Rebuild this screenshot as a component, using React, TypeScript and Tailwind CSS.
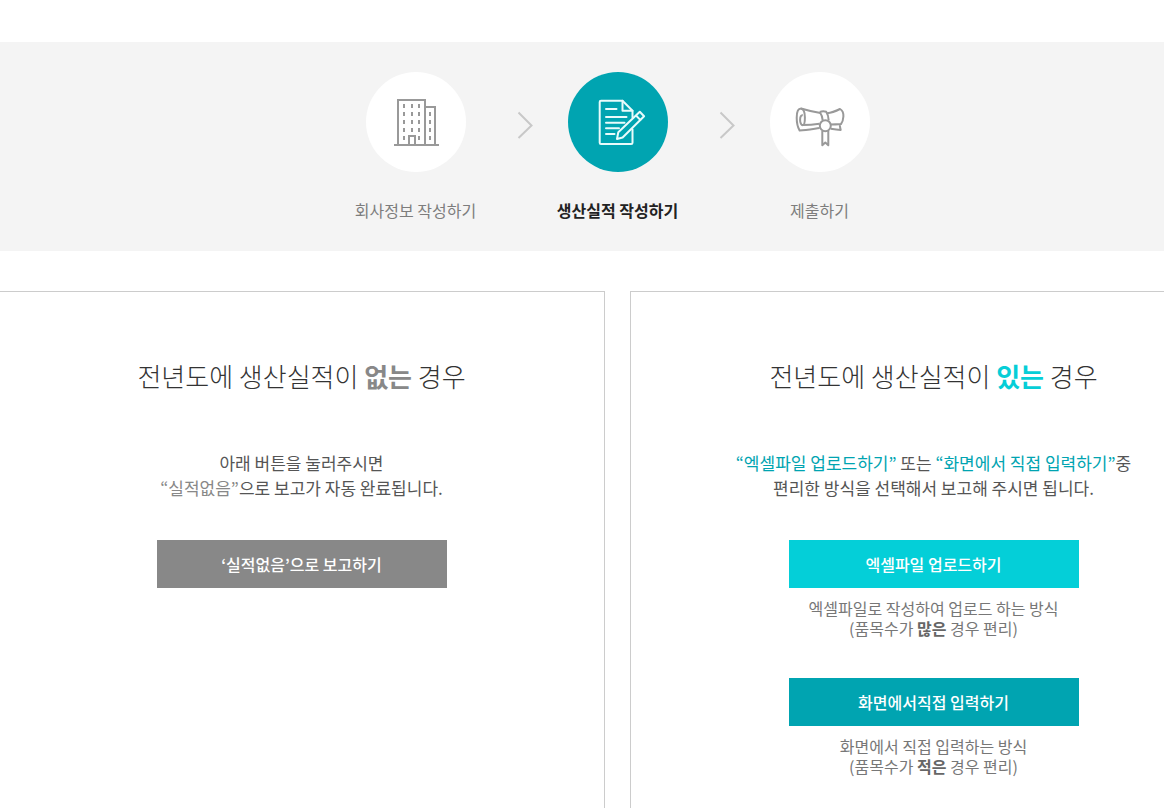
import type { ReactNode } from "react";

function BuildingIcon() {
  return (
    <svg viewBox="0 0 100 100" className="w-full h-full" fill="none" stroke="#999" strokeWidth="2" aria-hidden="true">
      <path d="M32 73V28h27v45M60 35h9v38M28 73h45M43 73v-9h6v9" />
      <path d="M38 32v4M46 32v4M53 32v4M38 40v4M46 40v4M53 40v4M38 48v4M46 48v4M53 48v4M38 56v4M46 56v4M53 56v4M38 64v4M53 64v4M64 40v4M64 48v4M64 56v4M64 64v4" />
    </svg>
  );
}

function DocumentIcon() {
  return (
    <svg viewBox="0 0 100 100" className="w-full h-full" fill="none" stroke="#e8fbfb" strokeWidth="2" strokeLinejoin="round" strokeLinecap="round" aria-hidden="true">
      <path d="M64.5 45.5V38.7L54.5 28.7H33a1.3 1.3 0 0 0-1.300 1.300v40.700A1.300 1.300 0 0 0 33 72h30.200a1.300 1.300 0 0 0 1.300-1.300V57.500" />
      <path d="M54.500 28.700v10h10" />
      <path d="M38 37h10.500M38 45h20.500M38 50.700h18.500M38 56.300h13M38 62h8.500" />
      <path d="M49 67l1.300-6.700L71.800 39.700l4.300 4.500-21.500 21.300zM68 43.500l4.500 4.600" />
    </svg>
  );
}

function ScrollIcon() {
  return (
    <svg viewBox="0 0 100 100" className="w-full h-full" fill="none" stroke="#999" strokeWidth="2" strokeLinejoin="round" aria-hidden="true">
      <path d="M31 36.500c-2.700 0-4.300 4-4.300 9.200 0 5 1.200 9.800 2.900 12.800 6.500-.6 13.200-1.600 20-2.500" />
      <path d="M31 36.500c2.500.5 3.900 4.300 3.900 9 0 3.800-.6 7.400-1.900 7.600-1.700.3-2.900-2.200-2.900-5.200 0-3 .9-5 2.700-4.600" />
      <path d="M31 36.500c6.500 2 12.800 3.400 19.500 4.400M33 53.100c5.500-.1 11-.6 16.500-1.400" />
      <path d="M49.800 40c2-.8 4.600-.8 6.400-.2 1.600 2.400 2.400 5.200 2.500 8.600M49.800 40c1.600 2.300 2.600 5 2.900 8.400" />
      <path d="M57 41.200c4.500-.4 8.700-2 13-4.200 2.400 1.400 3.600 4.300 3.400 7.500-.2 3.200-1 5.800-2.400 7.500-3.300.3-6.600.5-10.300.5M70 52.200c-.6 2.200.4 3.700.7 5.800-3.200-.2-6.200-.6-9.900-1.200" />
      <circle cx="55.300" cy="53.700" r="5.500" />
      <path d="M52.300 59V73.300l3-2.800 3 2.800V59" />
    </svg>
  );
}

function Arrow() {
  return (
    <li className="w-4 ml-[41px] mr-[25px] pt-[39px]" aria-hidden="true">
      <svg viewBox="0 0 16 28" className="w-4 h-7" fill="none" stroke="#c8c8c8" strokeWidth="2">
        <path d="M1.500 1.500L14.500 14.500L1.500 27" />
      </svg>
    </li>
  );
}

function Step({ label, active, children }: { label: string; active?: boolean; children: ReactNode }) {
  return (
    <li className="w-[120px] flex flex-col items-center" aria-current={active ? "step" : undefined}>
      <div className={`w-[100px] h-[100px] rounded-full ${active ? "bg-[#00a4b1]" : "bg-white"}`}>{children}</div>
      <span className={`mt-[26px] leading-6 whitespace-nowrap ${active ? "font-bold text-[#222]" : "text-[#7d7d7d]"}`}>
        {label}
      </span>
    </li>
  );
}

function ActionButton({ color, children }: { color: string; children: ReactNode }) {
  return (
    <button type="button" className={`block mx-auto w-[290px] h-12 text-white font-medium cursor-pointer ${color}`}>
      {children}
    </button>
  );
}

export default function App() {
  return (
    <div className="min-h-screen overflow-x-hidden bg-white flex flex-col font-['Noto_Sans_CJK_KR','Noto_Sans',sans-serif] text-base text-[#555]">
      <div className="min-w-[1239px] -ml-0.5 pt-[42px] grow flex flex-col">
        <nav className="bg-[#f4f4f4] pt-[30px] pb-[29px]" aria-label="작성 단계">
          <ol className="flex justify-center">
            <Step label="회사정보 작성하기">
              <BuildingIcon />
            </Step>
            <Arrow />
            <Step label="생산실적 작성하기" active>
              <DocumentIcon />
            </Step>
            <Arrow />
            <Step label="제출하기">
              <ScrollIcon />
            </Step>
          </ol>
        </nav>

        <main className="mt-10 grow grid grid-cols-2 gap-[25px] text-center">
          <section className="border border-b-0 border-[#ccc] pt-[66px] pb-7">
            <h2 className="text-[26px] leading-9 font-light text-[#333]">
              전년도에 생산실적이 <strong className="font-bold text-[#888]">없는</strong> 경우
            </h2>
            <p className="mt-14 mb-10 text-[17px] leading-[25px]">
              아래 버튼을 눌러주시면
              <br />
              <span className="text-[#888]">“실적없음”</span>으로 보고가 자동 완료됩니다.
            </p>
            <ActionButton color="bg-[#888]">‘실적없음’으로 보고하기</ActionButton>
          </section>

          <section className="border border-b-0 border-[#ccc] pt-[66px] pb-7">
            <h2 className="text-[26px] leading-9 font-light text-[#333]">
              전년도에 생산실적이 <strong className="font-bold text-[#06ced7]">있는</strong> 경우
            </h2>
            <p className="mt-14 mb-10 text-[17px] leading-[25px]">
              <span className="text-[#00a4b1]">“엑셀파일 업로드하기”</span> 또는{" "}
              <span className="text-[#00a4b1]">“화면에서 직접 입력하기”</span>중
              <br />
              편리한 방식을 선택해서 보고해 주시면 됩니다.
            </p>
            <ActionButton color="bg-[#04cfd8]">엑셀파일 업로드하기</ActionButton>
            <p className="mt-[10px] mb-10 leading-5 text-[#777]">
              엑셀파일로 작성하여 업로드 하는 방식
              <br />
              (품목수가 <strong className="font-bold text-[#666]">많은</strong> 경우 편리)
            </p>
            <ActionButton color="bg-[#00a4b1]">화면에서직접 입력하기</ActionButton>
            <p className="mt-[10px] leading-5 text-[#777]">
              화면에서 직접 입력하는 방식
              <br />
              (품목수가 <strong className="font-bold text-[#666]">적은</strong> 경우 편리)
            </p>
          </section>
        </main>
      </div>
    </div>
  );
}
